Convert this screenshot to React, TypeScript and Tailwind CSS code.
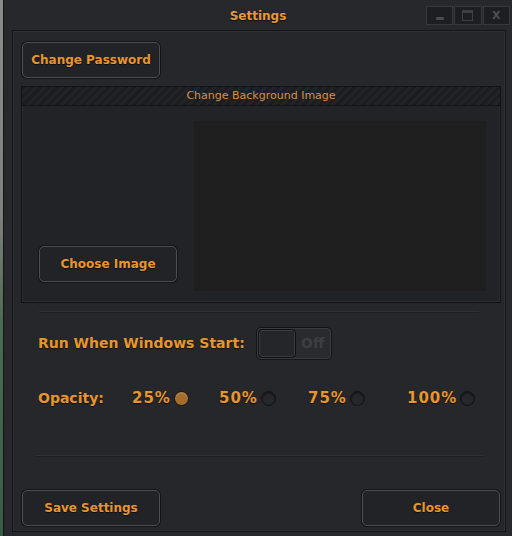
import React from 'react'

const font = { fontFamily: '"DejaVu Sans", Verdana, sans-serif' }

const orange = 'text-[#e8952e] [text-shadow:0_1px_1px_rgba(0,0,0,0.6)]'

const Btn = ({ label, className = '' }: { label: string; className?: string }) => (
  <div
    className={`flex h-[36px] w-[138px] items-center justify-center rounded-[5px] border border-[#4e4f54] bg-[#222327] shadow-[0_0_0_1px_#141416] text-[12px] font-bold ${orange} ${className}`}
  >
    {label}
  </div>
)

const Radio = ({ label, checked }: { label: string; checked?: boolean }) => (
  <div className="flex items-center gap-[3px]">
    <span className={`text-[15px] font-bold tracking-[1px] ${orange}`}>{label}</span>
    <span
      className={`h-[15px] w-[15px] rounded-full border border-[#121214] ${
        checked ? 'bg-[#a36d2e] shadow-[inset_0_1px_2px_rgba(255,220,160,0.3)]' : 'bg-[#26272b] shadow-[inset_0_1px_2px_rgba(0,0,0,0.6)]'
      }`}
    />
  </div>
)

const TitleButton = ({ children }: { children: React.ReactNode }) => (
  <div className="flex h-[19px] w-[28px] items-center justify-center border border-[#38393d] bg-[#1d1e21]">
    {children}
  </div>
)

export default function App() {
  return (
    <div className="flex h-[536px] w-[512px] overflow-hidden bg-[#26272b]" style={font}>
      {/* desktop showing at the left edge */}
      <div className="w-[3px] bg-[linear-gradient(180deg,#8a8c88_0%,#7d817c_40%,#4f6a52_60%,#3c5a48_100%)]" />

      <div className="flex flex-1 flex-col border-l border-[#141416] bg-[#27282c]">
        {/* title bar */}
        <div className="flex h-[30px] items-center">
          <div className="w-[86px]" />
          <div className="flex-1 pt-[1px] text-center text-[12px] font-bold text-[#e49a3a] [text-shadow:0_1px_1px_rgba(0,0,0,0.7)]">
            Settings
          </div>
          <div className="flex w-[86px] gap-[1px] pr-[2px]">
            <TitleButton>
              <div className="mt-[7px] h-[3px] w-[8px] rounded-[1px] bg-[#4a4b4f]" />
            </TitleButton>
            <TitleButton>
              <div className="h-[11px] w-[11px] border border-[#3e3f43] border-t-[3px]" />
            </TitleButton>
            <TitleButton>
              <span className="text-[11px] font-bold leading-none text-[#4d4e52]">X</span>
            </TitleButton>
          </div>
        </div>

        {/* content panel */}
        <div className="mb-[4px] ml-[8px] mr-[6px] flex flex-1 flex-col border border-[#151517] bg-[#26272b] shadow-[inset_0_0_0_1px_#2e2f33]">
          <div className="ml-[9px] mt-[11px]">
            <Btn label="Change Password" />
          </div>

          {/* background image group */}
          <div className="ml-[8px] mr-[4px] mt-[8px] flex h-[217px] flex-col border border-[#121214] bg-[#222327] shadow-[inset_0_0_0_1px_#2c2d31]">
            <div className="flex h-[19px] items-center justify-center border-b border-[#121214] bg-[repeating-linear-gradient(135deg,#1c1d20_0px,#1c1d20_3px,#222326_3px,#222326_6px)] text-[11px] text-[#d98f45]">
              Change Background Image
            </div>
            <div className="flex flex-1">
              <div className="flex flex-col justify-end pb-[20px] pl-[17px]">
                <Btn label="Choose Image" />
              </div>
              <div className="mb-[11px] ml-[17px] mt-[15px] w-[292px] bg-[#1f1f20]" />
            </div>
          </div>

          <div className="mx-[26px] mt-[8px] h-[1px] bg-[#303135] shadow-[0_1px_0_#1e1f22]" />

          {/* startup toggle */}
          <div className="mt-[15px] flex items-center">
            <span className={`ml-[25px] w-[218px] whitespace-nowrap text-[14px] font-bold ${orange}`}>
              Run When Windows Start:
            </span>
            <div className="flex h-[33px] w-[76px] items-center rounded-[5px] border border-[#141416] bg-[#2a2b2f] p-[1px] shadow-[inset_0_0_0_1px_#3a3b3f]">
              <div className="h-full w-[38px] rounded-[4px] border border-[#111113] bg-[#25262a] shadow-[inset_0_0_0_1px_#3a3b3f]" />
              <span className="ml-[5px] text-[14px] font-bold text-[#3d3e41]">Off</span>
            </div>
          </div>

          {/* opacity */}
          <div className="mt-[27px] flex items-center">
            <span className={`ml-[25px] w-[94px] text-[14px] font-bold ${orange}`}>Opacity:</span>
            <div className="w-[87px]">
              <Radio label="25%" checked />
            </div>
            <div className="w-[89px]">
              <Radio label="50%" />
            </div>
            <div className="w-[99px]">
              <Radio label="75%" />
            </div>
            <Radio label="100%" />
          </div>

          <div className="mx-[22px] mt-[45px] h-[1px] bg-[#303135] shadow-[0_1px_0_#1e1f22]" />

          {/* footer buttons */}
          <div className="mb-[5px] mt-auto flex justify-between pl-[9px] pr-[5px]">
            <Btn label="Save Settings" />
            <Btn label="Close" />
          </div>
        </div>
      </div>
    </div>
  )
}
